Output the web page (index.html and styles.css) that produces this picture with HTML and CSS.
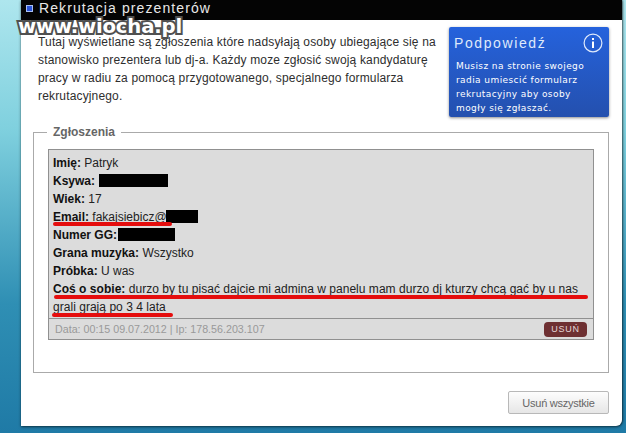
FILE: index.html
```html
<!DOCTYPE html>
<html lang="pl">
<head>
<meta charset="utf-8">
<title>Rekrutacja prezenterów</title>
<link rel="stylesheet" href="styles.css">
</head>
<body>
<div class="stage">
  <div class="window">
    <header class="topbar"><span class="bullet"></span><h1>Rekrutacja prezenterów</h1></header>
    <div class="intro">
      <p>Tutaj wyświetlane są zgłoszenia które nadsyłają osoby ubiegające się na stanowisko prezentera lub dj-a. Każdy moze zgłosić swoją kandydaturę pracy w radiu za pomocą przygotowanego, specjalnego formularza rekrutacyjnego.</p>
      <aside class="hint">
        <div class="hint-head"><h2>Podpowiedź</h2><svg class="info" width="20" height="20" viewBox="0 0 20 20"><circle cx="10" cy="10" r="8.9" fill="none" stroke="#dfe9fb" stroke-width="1.2"/><rect x="9" y="8.5" width="2" height="6.5" fill="#fff"/><rect x="9" y="5" width="2" height="2" fill="#fff"/></svg></div>
        <p>Musisz na stronie swojego radia umiescić formularz rekrutacyjny aby osoby mogły się zgłaszać.</p>
      </aside>
    </div>
    <fieldset class="group">
      <legend>Zgłoszenia</legend>
      <div class="entry">
        <div class="fields">
          <div class="row"><b>Imię:</b> Patryk</div>
          <div class="row"><b>Ksywa:</b> <span class="redact w69"></span></div>
          <div class="row"><b>Wiek:</b> 17</div>
          <div class="row"><b>Email:</b> fakajsiebicz@<span class="redact w32"></span></div>
          <div class="row"><b>Numer GG:</b> <span class="redact w57"></span></div>
          <div class="row"><b>Grana muzyka:</b> Wszystko</div>
          <div class="row"><b>Próbka:</b> U was</div>
          <div class="row about"><b>Coś o sobie:</b> durzo by tu pisać dajcie mi admina w panelu mam durzo dj kturzy chcą gać by u nas grali grają po 3 4 lata</div>
          <span class="ink ink-email"></span>
          <span class="ink ink-about"></span>
          <span class="ink ink-about2"></span>
        </div>
        <div class="entry-foot"><span>Data: 00:15 09.07.2012 | Ip: 178.56.203.107</span><a class="del">USUŃ</a></div>
      </div>
    </fieldset>
    <div class="actions"><button class="clear">Usuń wszystkie</button></div>
  </div>
  <div class="mark">www.wiocha.pl</div>
</div>
</body>
</html>
```
FILE: styles.css
```css
html, body { margin: 0; padding: 0; }
body { width: 626px; height: 433px; overflow: hidden; font-family: "Liberation Sans", Arial, sans-serif; }
.stage { position: relative; width: 626px; height: 433px; display: flex; align-items: flex-start;
  background: linear-gradient(180deg, #aee6ee 0%, #7fd0de 30%, #2f8fb4 70%, #1f7aa6 100%); }
.window { width: 601px; height: 426px; margin-left: 21px; background: #fff; border-radius: 0 0 6px 0; box-shadow: 1px 0 2px rgba(0,0,0,.45), 0 1px 3px rgba(0,0,0,.5); display: flex; flex-direction: column; }
.topbar { height: 20px; background: #040404; display: flex; align-items: flex-start; padding-left: 5px; gap: 6px; flex: none; }
.bullet { width: 5px; height: 5px; margin-top: 5px; background: #2b55d8; border: 1px solid #a9c0f2; }
h1 { margin: 0; font-size: 14px; font-weight: 400; line-height: 16px; color: #e8e8e8; letter-spacing: 1.1px; }
.intro { display: flex; justify-content: space-between; padding: 7px 0 0 17px; height: 105px; box-sizing: border-box; flex: none; }
.intro p { margin: 6px 0 0; width: 410px; font-size: 12px; line-height: 18px; color: #2e2e2e; letter-spacing: .16px; }
.hint { width: 160px; height: 90px; margin-right: 13px; background: linear-gradient(180deg, #2562dc, #2450ae); border-radius: 2px; box-shadow: 0 1px 3px rgba(0,0,0,.45); color: #fff; box-sizing: border-box; padding: 6px 6px 0 5px; }
.hint-head { display: flex; justify-content: space-between; align-items: center; }
h2 { margin: 0; font-size: 14px; font-weight: 400; letter-spacing: 1.6px; color: #dfe9fb; }
.hint p { margin: 6px 0 0 2px; width: 140px; font-family: "DejaVu Sans", sans-serif; font-size: 9px; line-height: 14px; letter-spacing: .42px; color: #fff; }
.group { margin: 0 0 0 12px; width: 576px; height: 248px; box-sizing: border-box; border: 1px solid #aaa; padding: 10px 14px 0; flex: none; min-width: 0; }
legend { margin-left: -1px; padding: 0 6px; font-size: 12px; font-weight: 700; color: #666; line-height: 14px; }
.entry { background: #dcdcdc; border: 1px solid #909090; width: 546px; box-sizing: border-box; }
.fields { position: relative; padding: 4px 4px 0; height: 168px; box-sizing: border-box; font-size: 12px; line-height: 18px; color: #222; }
.row b { color: #111; }
.about { letter-spacing: .03px; }
.redact { display: inline-block; height: 13px; background: #000; vertical-align: -2px; }
.w69 { width: 69px; margin-left: 1px; }
.w57 { width: 57px; margin-left: -2px; }
.w32 { width: 32px; margin-left: -1px; }
.ink { position: absolute; height: 4px; background: #e50d0d; border-radius: 2px; }
.ink-email { left: 4px; top: 72px; width: 119px; }
.ink-about { left: 5px; top: 145px; width: 534px; }
.ink-about2 { left: 3px; top: 163px; width: 121px; }
.entry-foot { border-top: 1px solid #909090; height: 20px; display: flex; justify-content: space-between; align-items: center; padding: 0 6px; font-size: 10.7px; color: #999; }
.del { background: #6e3032; color: #e4d8d8; border-radius: 4px; width: 43px; height: 15px; line-height: 15px; text-align: center; font-size: 9px; letter-spacing: .8px; }
.actions { display: flex; justify-content: flex-end; padding: 18px 13px 0 0; }
.clear { width: 101px; height: 23px; padding: 0; background: linear-gradient(180deg, #fdfdfd, #e6e6e6); border: 1px solid #b8b8b8; border-radius: 2px; font-family: "Liberation Sans", sans-serif; font-size: 11px; letter-spacing: -.25px; color: #666; }
.mark { position: absolute; left: 18px; top: 16px; font-family: "DejaVu Sans", sans-serif; font-weight: 700; font-size: 19.7px; line-height: 22px; color: #fff; letter-spacing: -.2px; -webkit-text-stroke: 4px #505050; paint-order: stroke fill; }
```
